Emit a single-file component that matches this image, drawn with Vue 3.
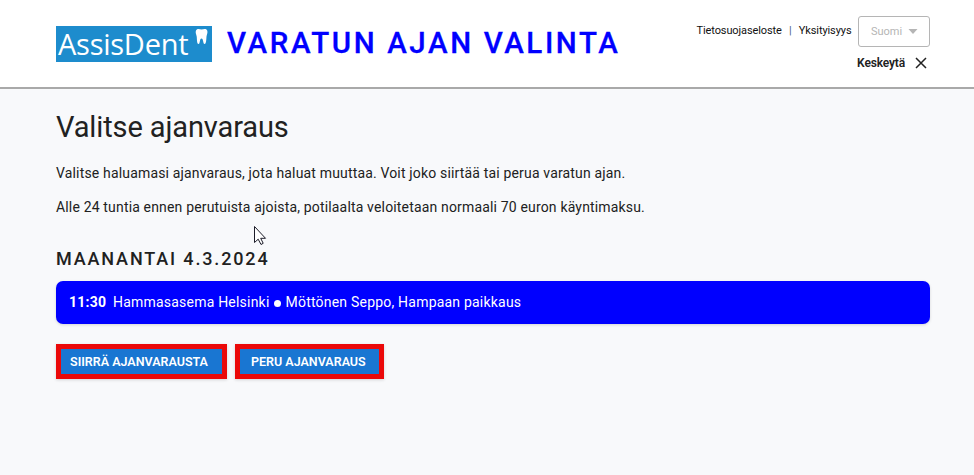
<script setup>
const paragraphs = [
  'Valitse haluamasi ajanvaraus, jota haluat muuttaa. Voit joko siirtää tai perua varatun ajan.',
  'Alle 24 tuntia ennen perutuista ajoista, potilaalta veloitetaan normaali 70 euron käyntimaksu.'
]
</script>

<template>
  <div class="page">
    <header class="header">
      <div class="logo">
        <span class="logo-text">AssisDent</span>
        <svg class="tooth" viewBox="0 0 13 17" width="13" height="17">
          <path d="M1 2.500C2.500 0 4.500 1 6.500 1.600 8.500 1 11 0 12.200 2.500c.8 2.200-.4 4-.7 6-.2 2.500-.2 7.500-1.900 7.500S8.500 10.500 6.500 10.500 5.200 16 3.500 16 2 11 1.700 8.500C1.400 6.500.1 4.700 1 2.500Z" fill="#fff" />
        </svg>
      </div>
      <h1 class="title">VARATUN AJAN VALINTA</h1>
      <div class="tools">
        <div class="links">
          <a>Tietosuojaseloste</a><span class="bar">|</span><a>Yksityisyys</a>
          <div class="select">
            <span>Suomi</span>
            <svg width="10" height="5" viewBox="0 0 10 5"><path d="M0.500 0h9L5 5Z" fill="#b5b5b5" /></svg>
          </div>
        </div>
        <div class="cancel">
          <span>Keskeytä</span>
          <svg width="12" height="12" viewBox="0 0 12 12"><path d="M1 1 11 11M11 1 1 11" stroke="#222" stroke-width="1.500" fill="none" /></svg>
        </div>
      </div>
    </header>
    <main class="main">
      <h2 class="heading">Valitse ajanvaraus</h2>
      <p v-for="(text, i) in paragraphs" :key="i" class="para">{{ text }}</p>
      <h3 class="date">MAANANTAI 4.3.2024</h3>
      <div class="slot">
        <b>11:30</b><span>Hammasasema Helsinki</span><i class="dot"></i><span>Möttönen Seppo, Hampaan paikkaus</span>
      </div>
      <div class="actions">
        <button class="move">SIIRRÄ AJANVARAUSTA</button>
        <button class="drop">PERU AJANVARAUS</button>
      </div>
    </main>
    <svg class="cursor" width="14" height="21" viewBox="0 0 14 21">
      <path d="M1.500 1.500V17.500L5.200 14.200 8 19.500 10.200 18.300 7.700 13.300H12.500Z" fill="#fff" stroke="#1c1c28" stroke-width="1" />
    </svg>
  </div>
</template>

<style>
body { background: #f8f9fb; overflow: hidden; }
</style>

<style scoped>
.page {
  position: relative;
  height: 475px;
  box-sizing: border-box;
  background: #f8f9fb;
  font-family: Roboto, "Liberation Sans", sans-serif;
  color: #212121;
}
h1, h2, h3, p { margin: 0; white-space: nowrap; }
.header {
  display: flex;
  align-items: flex-start;
  height: 89px;
  box-sizing: border-box;
  padding: 0 44px 0 56px;
  background: #fff;
  border-bottom: 2px solid #a9a9a9;
}
.logo {
  display: flex;
  width: 156px;
  height: 36px;
  margin-top: 26px;
  box-sizing: border-box;
  padding-left: 2px;
  background: #1d8ccd;
  color: #fff;
}
.logo-text {
  width: 137px;
  font: 400 29px/35px "Open Sans", "Noto Sans", sans-serif;
  letter-spacing: -0.25px;
}
.tooth { margin-top: 2px; }
.title {
  margin: 25px 0 0 15px;
  font-size: 29.5px;
  line-height: 36px;
  font-weight: 500;
  letter-spacing: 2.6px;
  color: #0000ff;
  -webkit-text-stroke: 0.3px #0000ff;
}
.tools {
  margin-left: auto;
  padding-top: 16px;
  display: flex;
  flex-direction: column;
  align-items: flex-end;
}
.links {
  display: flex;
  align-items: flex-start;
  font-size: 11px;
  line-height: 29px;
  letter-spacing: -0.1px;
  color: #111;
  white-space: nowrap;
}
.bar { width: 17px; text-align: center; color: #4d5f80; }
.select {
  display: flex;
  align-items: center;
  justify-content: space-between;
  width: 72px;
  height: 31px;
  margin-left: 6.500px;
  box-sizing: border-box;
  padding: 0 11px 0 12px;
  border: 1px solid #b5b5b5;
  border-radius: 3px;
  color: #b5b5b5;
  letter-spacing: 0;
}
.cancel {
  display: flex;
  align-items: center;
  gap: 10px;
  margin-top: 8px;
  padding-right: 3px;
  font-size: 12px;
  line-height: 16px;
  font-weight: 600;
  letter-spacing: -0.15px;
}
.main { padding: 20px 44px 0 56px; }
.heading { font-size: 29px; line-height: 36px; font-weight: 400; letter-spacing: -0.12px; margin-bottom: 18px; }
.para { font-size: 14px; line-height: 20px; margin-bottom: 14px; letter-spacing: 0.165px; }
.date { margin-top: 31px; font-size: 18px; line-height: 22px; font-weight: 500; letter-spacing: 1.85px; }
.slot {
  display: flex;
  align-items: center;
  height: 43px;
  margin-top: 11px;
  box-sizing: border-box;
  padding: 0 13px 1px;
  border-radius: 7px;
  background: #0000ff;
  color: #fff;
  font-size: 14px;
  letter-spacing: 0.21px;
  white-space: nowrap;
  box-shadow: 0 1px 3px rgba(0, 0, 0, 0.15);
}
.slot b { width: 44px; }
.dot { width: 7px; height: 7px; margin: 2px 5px 0 4px; border-radius: 50%; background: #fff; }
.actions { display: flex; gap: 8px; margin-top: 20px; }
.actions button {
  height: 35px;
  box-sizing: border-box;
  padding: 0;
  border: 5px solid #eb0909;
  background: #1976d2;
  color: #fff;
  font: 600 12.5px/25px Roboto, sans-serif;
  letter-spacing: 0;
  white-space: nowrap;
  box-shadow: 0 1px 3px rgba(0, 0, 0, 0.15);
}
.actions .move { width: 171px; text-align: left; padding-left: 9px; }
.actions .drop { width: 149px; text-align: left; padding-left: 11px; }
.cursor { position: absolute; left: 253px; top: 225px; }
</style>
